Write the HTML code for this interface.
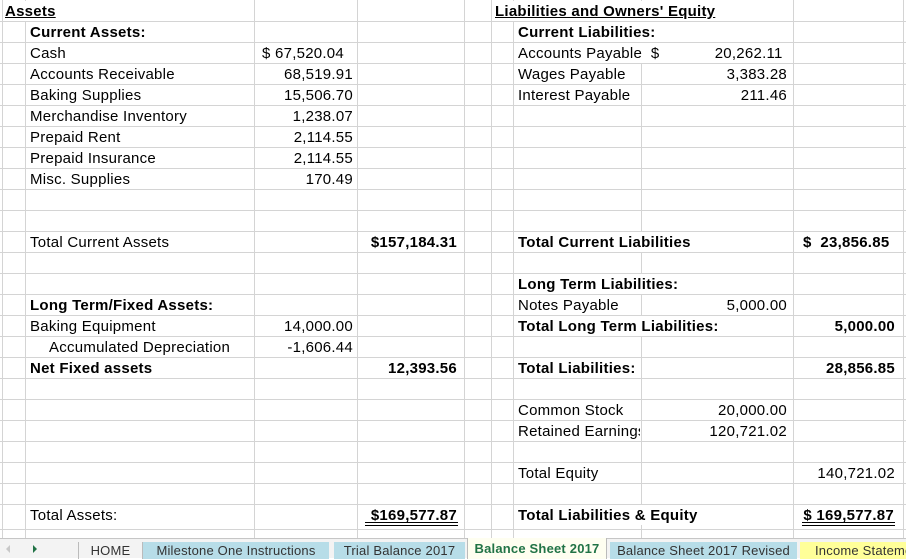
<!DOCTYPE html>
<html><head><meta charset="utf-8"><style>
*{margin:0;padding:0;box-sizing:border-box}
body{width:906px;height:558px;overflow:hidden;background:#fff;position:relative;font-family:"Liberation Sans",Arial,sans-serif;font-size:15px;color:#000;letter-spacing:0.25px}
.v{position:absolute;top:0;height:538px;width:1px;background:#d4d4d4}
.h{position:absolute;left:0;width:906px;height:1px;background:#d4d4d4}
.t{position:absolute;height:20px;line-height:21px;white-space:nowrap;background:#fff;padding:0 1px}
.r{text-align:right}
.b{font-weight:bold}
.u{text-decoration:underline}
.dbl{position:absolute;height:4px;border-top:1px solid #000;border-bottom:1px solid #000}
#tabs{position:absolute;left:0;top:538px;width:906px;height:20px;background:#f3f3f3;border-top:1px solid #c6c6c6;font-size:13px;color:#333;letter-spacing:0.2px}
.tab{position:absolute;top:3px;height:17px;line-height:17px;text-align:center;white-space:nowrap;overflow:hidden}
</style></head><body>
<div class="v" style="left:2px"></div>
<div class="v" style="left:25px"></div>
<div class="v" style="left:254px"></div>
<div class="v" style="left:357px"></div>
<div class="v" style="left:464px"></div>
<div class="v" style="left:491px"></div>
<div class="v" style="left:513px"></div>
<div class="v" style="left:641px"></div>
<div class="v" style="left:793px"></div>
<div class="v" style="left:903px"></div>
<div class="h" style="top:21px"></div><div class="h" style="top:42px"></div><div class="h" style="top:63px"></div><div class="h" style="top:84px"></div><div class="h" style="top:105px"></div><div class="h" style="top:126px"></div><div class="h" style="top:147px"></div><div class="h" style="top:168px"></div><div class="h" style="top:189px"></div><div class="h" style="top:210px"></div><div class="h" style="top:231px"></div><div class="h" style="top:252px"></div><div class="h" style="top:273px"></div><div class="h" style="top:294px"></div><div class="h" style="top:315px"></div><div class="h" style="top:336px"></div><div class="h" style="top:357px"></div><div class="h" style="top:378px"></div><div class="h" style="top:399px"></div><div class="h" style="top:420px"></div><div class="h" style="top:441px"></div><div class="h" style="top:462px"></div><div class="h" style="top:483px"></div><div class="h" style="top:504px"></div><div class="h" style="top:529px"></div>

<div class="t b u" style="left:4px;top:1px">Assets</div>
<div class="t b" style="left:29px;top:22px">Current Assets:</div>
<div class="t" style="left:29px;top:43px">Cash</div>
<div class="t" style="left:29px;top:64px">Accounts Receivable</div>
<div class="t" style="left:29px;top:85px">Baking Supplies</div>
<div class="t" style="left:29px;top:106px">Merchandise Inventory</div>
<div class="t" style="left:29px;top:127px">Prepaid Rent</div>
<div class="t" style="left:29px;top:148px">Prepaid Insurance</div>
<div class="t" style="left:29px;top:169px">Misc. Supplies</div>
<div class="t" style="left:261px;top:43px">$ 67,520.04</div>
<div class="t r" style="left:260px;width:94px;top:64px">68,519.91</div>
<div class="t r" style="left:260px;width:94px;top:85px">15,506.70</div>
<div class="t r" style="left:260px;width:94px;top:106px">1,238.07</div>
<div class="t r" style="left:260px;width:94px;top:127px">2,114.55</div>
<div class="t r" style="left:260px;width:94px;top:148px">2,114.55</div>
<div class="t r" style="left:260px;width:94px;top:169px">170.49</div>
<div class="t" style="left:29px;top:232px">Total Current Assets</div>
<div class="t r b" style="left:362px;width:96px;top:232px">$157,184.31</div>
<div class="t b" style="left:29px;top:295px">Long Term/Fixed Assets:</div>
<div class="t" style="left:29px;top:316px">Baking Equipment</div>
<div class="t" style="left:48px;top:337px">Accumulated Depreciation</div>
<div class="t b" style="left:29px;top:358px">Net Fixed assets</div>
<div class="t r" style="left:260px;width:94px;top:316px">14,000.00</div>
<div class="t r" style="left:260px;width:94px;top:337px">-1,606.44</div>
<div class="t r b" style="left:362px;width:96px;top:358px">12,393.56</div>
<div class="t" style="left:29px;top:505px">Total Assets:</div>
<div class="t r b" style="left:362px;width:96px;top:505px">$169,577.87</div>
<div class="dbl" style="left:365px;width:93px;top:522px"></div>

<div class="t b u" style="left:494px;top:1px">Liabilities and Owners' Equity</div>
<div class="t b" style="left:517px;top:22px">Current Liabilities:</div>
<div class="t" style="left:517px;top:43px">Accounts Payable&nbsp; $</div>
<div class="t" style="left:517px;top:64px">Wages Payable</div>
<div class="t" style="left:517px;top:85px">Interest Payable</div>
<div class="t r" style="left:660px;width:128px;top:43px">20,262.11&nbsp;</div>
<div class="t r" style="left:660px;width:128px;top:64px">3,383.28</div>
<div class="t r" style="left:660px;width:128px;top:85px">211.46</div>
<div class="t b" style="left:517px;top:232px">Total Current Liabilities</div>
<div class="t b" style="left:802px;top:232px">$&nbsp;&nbsp;23,856.85</div>
<div class="t b" style="left:517px;top:274px">Long Term Liabilities:</div>
<div class="t" style="left:517px;top:295px">Notes Payable</div>
<div class="t r" style="left:660px;width:128px;top:295px">5,000.00</div>
<div class="t b" style="left:517px;top:316px">Total Long Term Liabilities:</div>
<div class="t r b" style="left:796px;width:100px;top:316px">5,000.00</div>
<div class="t b" style="left:517px;top:358px">Total Liabilities:</div>
<div class="t r b" style="left:796px;width:100px;top:358px">28,856.85</div>
<div class="t" style="left:517px;top:400px">Common Stock</div>
<div class="t r" style="left:660px;width:128px;top:400px">20,000.00</div>
<div class="t" style="left:517px;top:421px;width:123px;overflow:hidden">Retained Earnings</div>
<div class="t r" style="left:660px;width:128px;top:421px">120,721.02</div>
<div class="t" style="left:517px;top:463px">Total Equity</div>
<div class="t r" style="left:796px;width:100px;top:463px">140,721.02</div>
<div class="t b" style="left:517px;top:505px">Total Liabilities &amp; Equity</div>
<div class="t r b" style="left:796px;width:99px;top:505px">$ 169,577.87</div>
<div class="dbl" style="left:802px;width:93px;top:522px"></div>

<div id="tabs">
 <div style="position:absolute;left:6px;top:6px;width:0;height:0;border-top:4px solid transparent;border-bottom:4px solid transparent;border-right:4px solid #c8c8c8"></div>
 <div style="position:absolute;left:33px;top:6px;width:0;height:0;border-top:4px solid transparent;border-bottom:4px solid transparent;border-left:4px solid #217346"></div>
 <div style="position:absolute;left:78px;top:3px;width:1px;height:17px;background:#bbb"></div>
 <div class="tab" style="left:79px;width:63px">HOME</div>
 <div style="position:absolute;left:142px;top:3px;width:1px;height:17px;background:#bbb"></div>
 <div class="tab" style="left:143px;width:186px;background:#b7dde8">Milestone One Instructions</div>
 <div class="tab" style="left:334px;width:131px;background:#b7dde8">Trial Balance 2017</div>
 <div class="tab" style="left:467px;top:-1px;height:21px;line-height:22px;width:140px;background:#fefef0;color:#217346;font-weight:bold;border-left:1px solid #bbb;border-right:1px solid #bbb">Balance Sheet 2017</div>
 <div class="tab" style="left:610px;width:187px;background:#b7dde8">Balance Sheet 2017 Revised</div>
 <div class="tab" style="left:800px;width:106px;background:#ffff99;text-align:left;padding-left:15px">Income Statement</div>
</div>
</body></html>
